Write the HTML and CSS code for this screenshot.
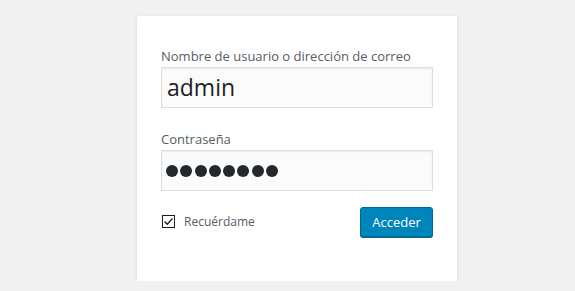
FILE: index.html
```html
<!DOCTYPE html>
<html lang="es">

<head>
  <meta charset="UTF-8">
  <meta name="viewport" content="width=device-width, initial-scale=1.0">
  <title>Acceder</title>
  <link rel="stylesheet" href="styles.css">
</head>

<body>
  <div class="login">
    <form class="loginform">
      <label class="field-label" for="user_login">Nombre de usuario o dirección de correo</label>
      <div class="input">admin</div>
      <label class="field-label" for="user_pass">Contraseña</label>
      <div class="input password">
        <span class="dot"></span><span class="dot"></span><span class="dot"></span><span class="dot"></span>
        <span class="dot"></span><span class="dot"></span><span class="dot"></span><span class="dot"></span>
      </div>
      <div class="submit-row">
        <label class="remember">
          <span class="check">
            <svg width="11" height="11" viewBox="0 0 11 11">
              <path d="M1.5 5.5 L4.3 8.3 L9.6 2.4" fill="none" stroke="#1e1e1e" stroke-width="1.4" />
            </svg>
          </span>
          Recuérdame
        </label>
        <button class="button" type="button">Acceder</button>
      </div>
    </form>
  </div>
</body>

</html>
```

FILE: styles.css
```css
html,
body {
  margin: 0;
  padding: 0;
  background-color: #f1f1f1;
  font-family: "Open Sans", "Noto Sans", sans-serif;
  color: #444;
}

* {
  box-sizing: border-box;
}

.login {
  padding: 16px 0 0 137px;
}

.loginform {
  width: 320px;
  height: 265px;
  background-color: #fff;
  box-shadow: 0 1px 3px rgba(0, 0, 0, 0.13);
  padding: 30px 24px 0;
}

.field-label {
  display: block;
  font-size: 13px;
  line-height: 20px;
  color: #555d66;
}

.input {
  width: 272px;
  height: 41px;
  margin: 1px 0 21px;
  padding: 0 5px;
  background-color: #fbfbfb;
  border: 1px solid #ddd;
  box-shadow: inset 0 1px 2px rgba(0, 0, 0, 0.07);
  font-size: 23px;
  line-height: 38px;
  color: #1e1e1e;
}

.password {
  display: flex;
  align-items: center;
  gap: 2.3px;
  padding-left: 4px;
  margin-bottom: 16px;
}

.dot {
  width: 12px;
  height: 12px;
  border-radius: 50%;
  background-color: #23282d;
}

.submit-row {
  display: flex;
  justify-content: space-between;
  align-items: flex-start;
}

.remember {
  display: flex;
  align-items: center;
  gap: 9px;
  margin-top: 6px;
  font-size: 12px;
  color: #555d66;
}

.check {
  display: flex;
  align-items: center;
  justify-content: center;
  width: 13px;
  height: 13px;
  margin-left: 1px;
  border: 1px solid #1e1e1e;
  background-color: #fff;
}

.button {
  width: 73px;
  height: 30px;
  padding: 0;
  background-color: #0085ba;
  border: 1px solid #006799;
  border-radius: 3px;
  box-shadow: 0 1px 0 #006799;
  color: #fff;
  font-family: inherit;
  font-size: 13px;
  cursor: pointer;
}
```
